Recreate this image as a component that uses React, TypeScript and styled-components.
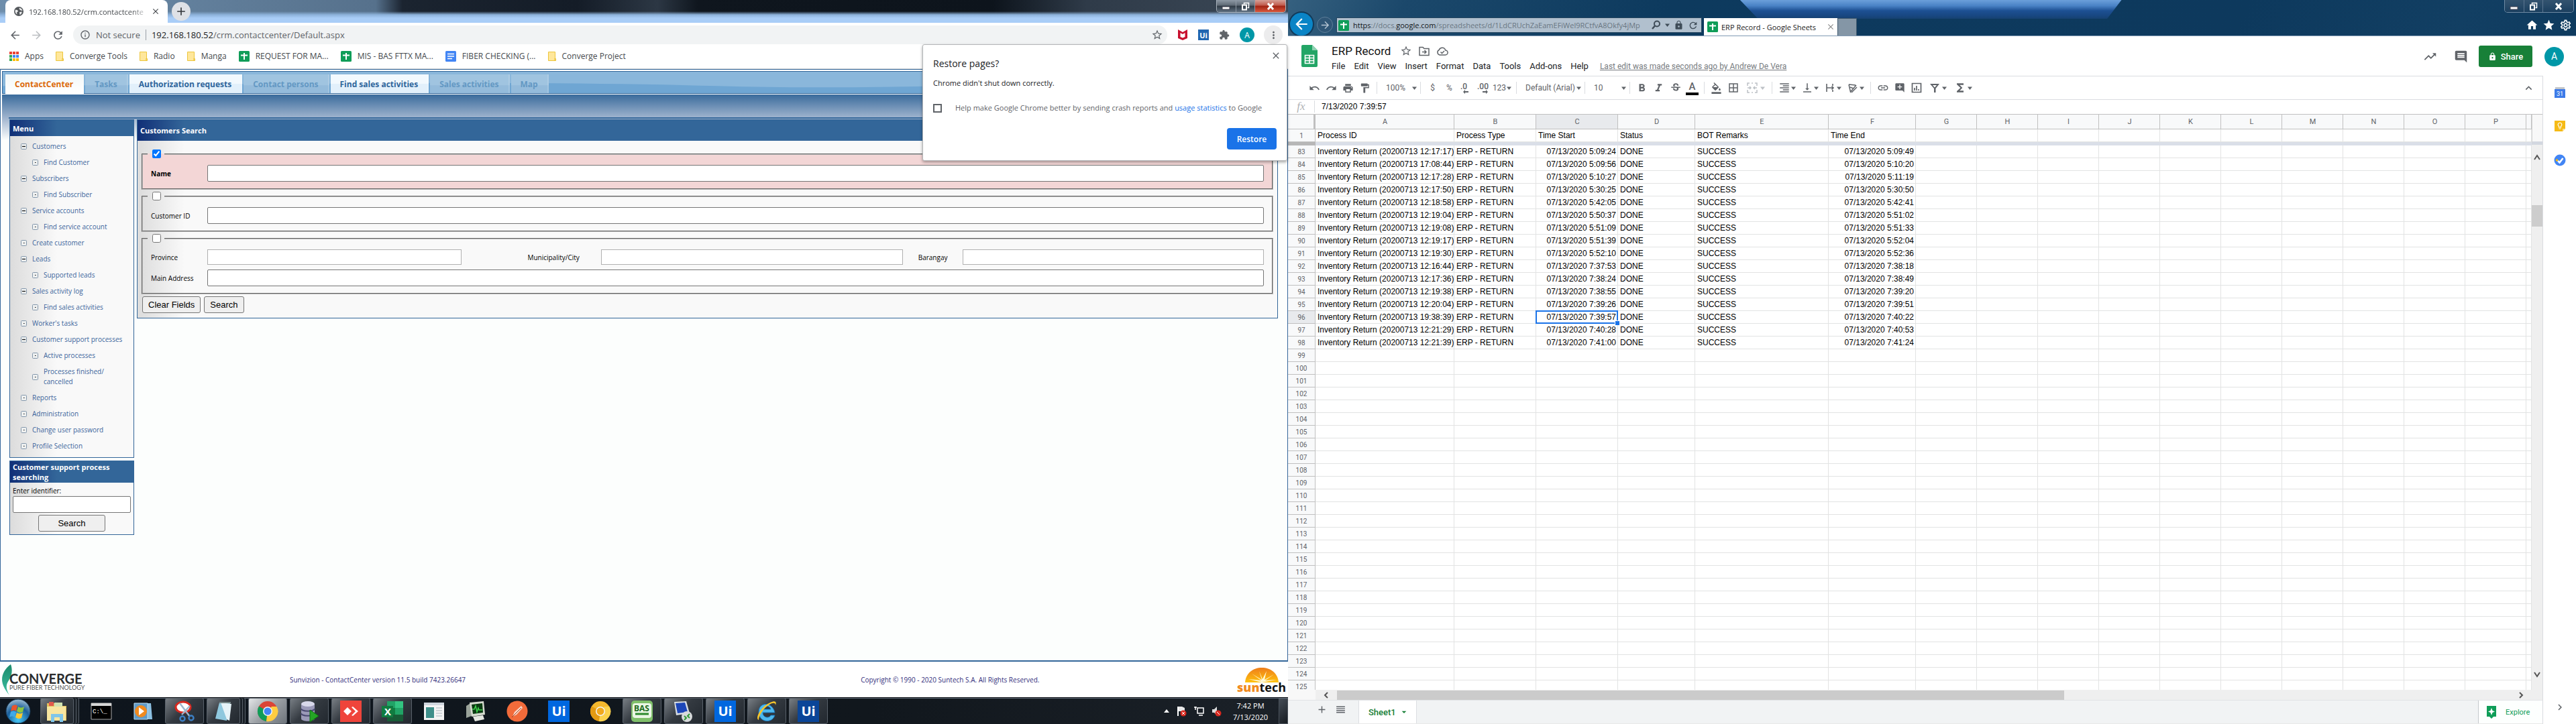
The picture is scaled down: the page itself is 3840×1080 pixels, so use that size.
import React from "react";
import styled, { createGlobalStyle, css } from "styled-components";
import {
  MdUndo, MdRedo, MdPrint, MdFormatPaint, MdFormatBold, MdFormatItalic, MdStrikethroughS,
  MdFormatColorFill, MdBorderAll, MdFormatAlignRight, MdVerticalAlignBottom, MdLink, MdAddComment,
  MdFunctions, MdTrendingUp, MdComment, MdLock, MdStarBorder, MdExtension, MdStar, MdHome,
  MdKeyboardArrowUp, MdChevronRight, MdArrowBack, MdArrowForward, MdRefresh, MdClose, MdMoreVert,
  MdInfoOutline, MdAdd, MdReorder, MdArrowDropDown, MdOutlineSettings,
} from "react-icons/md";

const ui = `"Open Sans", "Noto Sans", sans-serif`;
const arial = `"Liberation Sans", Arial, sans-serif`;
const roboto = `Roboto, "Liberation Sans", sans-serif`;
const navy = "#336699";

const Global = createGlobalStyle`
  * { box-sizing: border-box; }
  body { margin: 0; background: #fff; font-family: ${ui}; font-size: 12px; overflow: hidden; }
  button, input, select { font: inherit; margin: 0; }
  button { padding: 0; border: 0; background: none; color: inherit; }
  svg { display: block; flex: none; }
  a { color: inherit; text-decoration: none; }
`;

const Desktop = styled.div`
  display: grid;
  grid-template-columns: 1fr 1fr;
  height: 100vh;
  min-height: 800px;
`;
const Screen = styled.section`
  display: flex;
  flex-direction: column;
  min-width: 0;
  min-height: 0;
  background: #fff;
`;
const Spacer = styled.div<{ $grow?: number }>`
  flex: ${(p) => p.$grow ?? 1};
`;

/* ---------- window caption buttons ---------- */

const Caption = styled.div<{ $aero?: boolean }>`
  display: flex;
  width: 104px;
  height: 19px;
  border: 1px solid ${(p) => (p.$aero ? "#6f8aa3" : "#a9b3bd")};
  border-top: 0;
  border-radius: 0 0 5px 5px;
  overflow: hidden;
  color: #fff;
`;
const CaptionButton = styled.button<{ $close?: boolean; $aero?: boolean }>`
  flex: ${(p) => (p.$close ? "0 0 46px" : "1")};
  display: flex;
  justify-content: center;
  align-items: center;
  border-left: 1px solid ${(p) => (p.$aero ? "#5b7690" : "#8f99a4")};
  background: ${(p) =>
    p.$aero
      ? "linear-gradient(#33536f, #284a68 50%, #1b3f5f)"
      : p.$close
      ? "linear-gradient(#d5a097, #c0594a 45%, #a02313 50%, #d8583d)"
      : "linear-gradient(#8e99a5, #5e6974 45%, #2f3a45 50%, #5f7080)"};
  &:first-child {
    border-left: 0;
  }
`;
const CaptionButtons = ({ aero }: { aero?: boolean }) => (
  <Caption $aero={aero}>
    <CaptionButton $aero={aero} aria-label="Minimize">
      <svg width="13" height="12"><rect x="1" y="7" width="11" height="4" fill="#fff" stroke="#445" strokeWidth="1" /></svg>
    </CaptionButton>
    <CaptionButton $aero={aero} aria-label="Restore down">
      <svg width="13" height="13"><path d="M4.500 3.500V1.500h7v7h-2" fill="none" stroke="#fff" strokeWidth="1.500" /><path d="M2 4.500h6v7H2z" fill="none" stroke="#fff" strokeWidth="2" /></svg>
    </CaptionButton>
    <CaptionButton $aero={aero} $close aria-label="Close window">
      <svg width="12" height="11"><path d="M2 1l8 9M10 1L2 10" stroke="#fff" strokeWidth="3" /></svg>
    </CaptionButton>
  </Caption>
);

/* ---------- Chrome shell ---------- */

const TabStrip = styled.header`
  display: flex;
  align-items: flex-start;
  flex: none;
  height: 34px;
  padding: 0 3px 0 8px;
  background:
    linear-gradient(transparent 17px, #8db2da 22px, #a9cdf7 27px, #a9cdf7),
    linear-gradient(90deg, #6e8eac 0, #56718c 560px, #1b2430 600px, #141c27 860px, #2c3744 980px, #0f161e 1040px, #0d141c 1480px, #2f3b49 1620px, #3b4856);
`;
const BrowserTab = styled.div`
  display: flex;
  align-items: center;
  width: 242px;
  height: 34px;
  padding: 0 11px 0 13px;
  gap: 8px;
  background: #fff;
  border-radius: 8px 8px 0 0;
  color: #45494d;
`;
const TabTitle = styled.span`
  flex: 1;
  font-size: 11px;
  white-space: nowrap;
  mask-image: linear-gradient(90deg, #000 88%, rgba(0, 0, 0, 0.2));
`;
const NewTab = styled.button`
  display: grid;
  place-items: center;
  width: 28px;
  height: 28px;
  margin: 3px 0 0 6px;
  border-radius: 50%;
  background: #dee1e6;
  color: #33373b;
`;
const OmniRow = styled.div`
  display: flex;
  align-items: center;
  flex: none;
  height: 36px;
  padding: 0 8px 0 13px;
  gap: 14px;
  color: #5f6368;
`;
const IconButton = styled.button<{ $dim?: boolean }>`
  display: grid;
  place-items: center;
  width: 18px;
  height: 20px;
  color: ${(p) => (p.$dim ? "#bbbec1" : "inherit")};
`;
const Omnibox = styled.div`
  flex: 1;
  display: flex;
  align-items: center;
  height: 28px;
  padding: 0 6px 0 10px;
  gap: 8px;
  border-radius: 14px;
  background: #f1f3f4;
  font-size: 13px;
  white-space: nowrap;
`;
const OmniDivider = styled.i`
  width: 1px;
  height: 16px;
  background: #9aa0a6;
`;
const UrlText = styled.span`
  flex: 1;
  b {
    font-weight: 400;
    color: #202124;
  }
`;
const Round = styled.span<{ $size: number; $bg: string }>`
  display: grid;
  place-items: center;
  flex: none;
  width: ${(p) => p.$size}px;
  height: ${(p) => p.$size}px;
  border-radius: 50%;
  background: ${(p) => p.$bg};
  color: #fff;
  font-size: ${(p) => (p.$size > 24 ? 14 : 12)}px;
`;
const UiBadge = styled.span<{ $size: number; $bg: string }>`
  display: grid;
  place-items: center;
  width: ${(p) => p.$size}px;
  height: ${(p) => p.$size}px;
  background: ${(p) => p.$bg};
  color: #fff;
  font: 700 ${(p) => (p.$size > 20 ? 20 : 11)}px/1 ${ui};
`;
const Bookmarks = styled.nav`
  display: flex;
  align-items: center;
  flex: none;
  height: 33px;
  padding: 0 14px 5px;
  gap: 18px;
  border-bottom: 1px solid #d6d8db;
  white-space: nowrap;
  color: #45494d;
`;
const Bookmark = styled.a`
  display: flex;
  align-items: center;
  gap: 9px;
`;

const SheetsMark = ({ size = 16 }: { size?: number }) => (
  <svg width={size} height={size} viewBox="0 0 16 16"><rect width="16" height="16" rx="1.500" fill="#0f9d58" /><path d="M8 3v10M3 6.500h10" stroke="#fff" strokeWidth="2" /></svg>
);
const DocsMark = () => (
  <svg width="16" height="16" viewBox="0 0 16 16"><rect width="16" height="16" rx="1.500" fill="#4285f4" /><path d="M3 4.500h10M3 8h10M3 11.500h7" stroke="#fff" strokeWidth="1.500" /></svg>
);
const Folder = () => (
  <svg width="12" height="14" viewBox="0 0 12 14"><path d="M.5.500h10v10h1v3H.500z" fill="#ffe79b" stroke="#ecc53c" /><path d="M10 10v3" stroke="#e8b923" /></svg>
);
const AppsMark = () => {
  const c = ["#ea4335", "#ea4335", "#ea4335", "#34a853", "#4285f4", "#4285f4", "#34a853", "#fbbc05", "#fbbc05"];
  return (
    <svg width="14" height="14">{c.map((f, i) => <rect key={i} x={(i % 3) * 5} y={Math.floor(i / 3) * 5} width="4" height="4" fill={f} />)}</svg>
  );
};
const GlobeMark = () => (
  <svg width="14" height="14" viewBox="0 0 14 14"><circle cx="7" cy="7" r="7" fill="#54585c" /><path d="M2 4.500l3 .5 1 2-2 1.500.5 3L2.500 10 1.500 7z M7.500 1.500L11 3l1.500 3-2.500-.5L8 4z M8 8l4-.5-1.500 3.500L8.500 12z" fill="#fff" opacity=".9" /></svg>
);

const bookmarks: [React.ReactNode, string][] = [
  [<AppsMark />, "Apps"], [<Folder />, "Converge Tools"], [<Folder />, "Radio"], [<Folder />, "Manga"],
  [<SheetsMark />, "REQUEST FOR MA..."], [<SheetsMark />, "MIS - BAS FTTX MA..."], [<DocsMark />, "FIBER CHECKING (..."],
  [<Folder />, "Converge Project"],
];

/* ---------- restore bubble ---------- */

const ChromeWindow = styled.div`
  position: relative;
  display: flex;
  flex-direction: column;
  flex: 1;
  min-height: 0;
`;
const Bubble = styled.aside`
  position: absolute;
  z-index: 5;
  top: 66px;
  right: 1px;
  width: 544px;
  padding: 18px 15px 16px;
  background: #fff;
  border: 1px solid #b4b6b8;
  border-radius: 3px;
  box-shadow: 0 2px 4px rgba(0, 0, 0, 0.35);
  color: #202124;
  h2 {
    margin: 0 0 11px;
    font-size: 14px;
    font-weight: 400;
    line-height: 20px;
  }
  p {
    margin: 0 0 21px;
    font-size: 11px;
    line-height: 16px;
  }
`;
const BubbleClose = styled.button`
  position: absolute;
  top: 8px;
  right: 8px;
  color: #5f6368;
`;
const Consent = styled.label`
  display: flex;
  align-items: center;
  gap: 20px;
  margin-bottom: 22px;
  font-size: 11px;
  line-height: 16px;
  color: #5f6368;
  white-space: nowrap;
  a {
    color: #1a73e8;
  }
  input {
    appearance: none;
    width: 13px;
    height: 13px;
    flex: none;
    border: 2px solid #5f6368;
  }
`;
const RestoreButton = styled.button`
  display: block;
  width: 74px;
  height: 32px;
  margin-left: auto;
  border-radius: 4px;
  background: #1a73e8;
  color: #fff;
  font-weight: 600;
`;

/* ---------- CRM page ---------- */

const CrmPage = styled.main`
  flex: 1;
  display: flex;
  flex-direction: column;
  min-height: 0;
  padding: 2px 2px 0;
  border: 1px solid ${navy};
  border-bottom-width: 2px;
  background: #fff;
`;
const NavBar = styled.nav`
  position: relative;
  flex: none;
  display: flex;
  align-items: flex-end;
  gap: 2px;
  height: 34px;
  padding: 0 4px;
  border: 1px solid ${navy};
  background: #8ab7db;
  box-shadow: 0 1px 0 #fff;
`;
const Wave = styled.svg`
  position: absolute;
  inset: 0;
  width: 100%;
  height: 100%;
`;
const NavTab = styled.a<{ $kind: "active" | "on" | "off" }>`
  position: relative;
  height: 28px;
  padding: 0 14px;
  border-right: 2px solid rgba(255, 255, 255, 0.15);
  font-weight: 700;
  line-height: 29px;
  color: ${(p) => ({ active: "#dc6a0c", on: "#2f669b", off: "#6398c3" }[p.$kind])};
  background: ${(p) =>
    ({
      active: "linear-gradient(#f2f7f8, #fff)",
      on: "linear-gradient(#f2f9fe 48%, #e2f0fb 52%)",
      off: "linear-gradient(#a0c4e0 55%, #94bbdb 60%)",
    }[p.$kind])};
  ${(p) =>
    p.$kind === "active" &&
    css`
      box-shadow: 0 2px 0 #fff;
    `}
`;
const Stage = styled.div`
  flex: 1;
  min-height: 0;
  margin-top: 1px;
  padding: 34px 12px 0 10px;
  background: linear-gradient(#3a6b9c, #9db2cd 34px, #fcfefd 68px);
`;
const Columns = styled.div`
  display: grid;
  grid-template-columns: 186px 1fr;
  align-items: start;
  gap: 4px;
  padding: 1px 0 0 1px;
  border-top: 2px solid ${navy};
`;
const Side = styled.div`
  display: grid;
  gap: 4px;
`;
const Panel = styled.section`
  border: 1px solid ${navy};
  background: linear-gradient(90deg, #dcdcdc, #f9f9f9 70px);
`;
const PanelTitle = styled.h3<{ $h: number }>`
  display: flex;
  align-items: center;
  min-height: ${(p) => p.$h}px;
  margin: 0;
  padding: 1px 4px;
  background: linear-gradient(90deg, #112f77, ${navy} 70px);
  color: #fff;
  font-size: 11px;
  font-weight: 700;
  line-height: 15px;
`;
const MenuList = styled.ul`
  display: flex;
  flex-direction: column;
  gap: 9px;
  margin: 0;
  padding: 8px 8px 9px 16px;
  list-style: none;
`;
const MenuItem = styled.li<{ $sub?: boolean }>`
  display: flex;
  align-items: center;
  gap: 8px;
  padding-left: ${(p) => (p.$sub ? 17 : 0)}px;
  font-size: 10px;
  line-height: 15px;
  color: #3c659c;
`;
const NodeBox = ({ open }: { open?: boolean }) => (
  <svg width="9" height="9"><rect x=".5" y=".5" width="8" height="8" rx="1" fill="#eef0f0" stroke="#8397ab" /><path d={open ? "M2 4.500h5" : "M4 4.500h1.500"} stroke="#111" strokeWidth="1.200" /></svg>
);
const menu: [string, number, boolean][] = [
  ["Customers", 0, true], ["Find Customer", 1, false], ["Subscribers", 0, true], ["Find Subscriber", 1, false],
  ["Service accounts", 0, true], ["Find service account", 1, false], ["Create customer", 0, false], ["Leads", 0, true],
  ["Supported leads", 1, false], ["Sales activity log", 0, true], ["Find sales activities", 1, false], ["Worker's tasks", 0, false],
  ["Customer support processes", 0, true], ["Active processes", 1, false], ["Processes finished/ cancelled", 1, false],
  ["Reports", 0, false], ["Administration", 0, false], ["Change user password", 0, false], ["Profile Selection", 0, false],
];
const FinderBody = styled.form`
  display: flex;
  flex-direction: column;
  align-items: center;
  padding: 5px 4px 4px;
  gap: 3px;
  font-size: 10px;
  label {
    align-self: stretch;
    line-height: 15px;
  }
`;
const TextInput = styled.input<{ $soft?: boolean }>`
  display: block;
  width: 100%;
  min-width: 0;
  height: ${(p) => (p.$soft ? 23 : 25)}px;
  border: 1px solid ${(p) => (p.$soft ? "#b0b0b0" : "#767676")};
  border-radius: ${(p) => (p.$soft ? 0 : 2)}px;
  background: #fff;
`;
const PushButton = styled.button<{ $w?: number }>`
  width: ${(p) => (p.$w ? `${p.$w}px` : "auto")};
  height: 25px;
  padding: 0 8px;
  border: 1px solid #767676;
  border-radius: 3px;
  background: #efefef;
  color: #000;
  font: 13px ${arial};
`;
const SearchBody = styled.form`
  display: flex;
  flex-direction: column;
  gap: 3px;
  padding: 13px 6px 7px;
`;
const Group = styled.fieldset<{ $on?: boolean }>`
  min-width: 0;
  margin: 0;
  padding: 10px 12px;
  border: 2px groove #b8b8b8;
  background: ${(p) => (p.$on ? "#f3d6d6" : "transparent")};
  legend {
    margin-left: -5px;
    padding: 0 5px 0 7px;
  }
  legend input {
    display: block;
    width: 13px;
    height: 13px;
  }
`;
const FieldRow = styled.div`
  display: flex;
  align-items: center;
  font-size: 10px;
  & + & {
    margin-top: 7px;
  }
`;
const FieldLabel = styled.label<{ $w: number; $pad?: number; $bold?: boolean }>`
  flex: 0 0 ${(p) => p.$w}px;
  padding-left: ${(p) => p.$pad ?? 0}px;
  font-weight: ${(p) => (p.$bold ? 700 : 400)};
`;
const Cell = styled.div<{ $grow: number }>`
  flex: ${(p) => p.$grow} 1 0;
`;
const Buttons = styled.div`
  display: flex;
  gap: 5px;
  padding-left: 1px;
`;
const Footer = styled.footer`
  flex: none;
  display: flex;
  align-items: center;
  height: 53px;
  padding: 0 3px;
  font-size: 10px;
  color: #332e7c;
  background: #fff;
`;
const Converge = styled.div`
  display: flex;
  align-items: center;
  width: 429px;
  color: #2a2c2e;
  font-family: Lato, sans-serif;
  div {
    margin-left: -11px;
    padding-top: 6px;
  }
  strong {
    display: block;
    font-size: 20px;
    line-height: 18px;
  }
  small {
    display: block;
    font-size: 9px;
    line-height: 9px;
    color: #555;
  }
`;
const Suntech = styled.div`
  display: flex;
  flex-direction: column;
  align-items: center;
  color: #111;
  font: 700 18px/14px ${ui};
  b {
    color: #f18a1c;
  }
`;

const addressParts = ["Province", "Municipality/City", "Barangay"];

const CrmBody = () => (
  <>
    <CrmPage>
      <NavBar>
        <Wave viewBox="0 0 1900 33" preserveAspectRatio="none" aria-hidden="true">
          <path d="M0 22C500 18 800 14 1060 22S1600 12 1900 16V33H0z" fill="#6fa6d3" />
        </Wave>
        <NavTab $kind="active" href="#">ContactCenter</NavTab>
        <NavTab $kind="off" href="#">Tasks</NavTab>
        <NavTab $kind="on" href="#">Authorization requests</NavTab>
        <NavTab $kind="off" href="#">Contact persons</NavTab>
        <NavTab $kind="on" href="#">Find sales activities</NavTab>
        <NavTab $kind="off" href="#">Sales activities</NavTab>
        <NavTab $kind="off" href="#">Map</NavTab>
      </NavBar>
      <Stage>
        <Columns>
          <Side>
            <Panel>
              <PanelTitle $h={24}>Menu</PanelTitle>
              <MenuList>
                {menu.map(([t, lvl, open]) => (
                  <MenuItem key={t} $sub={lvl === 1}><NodeBox open={open} /><a href="#">{t}</a></MenuItem>
                ))}
              </MenuList>
            </Panel>
            <Panel>
              <PanelTitle $h={32}>Customer support process searching</PanelTitle>
              <FinderBody>
                <label>Enter identifier:<TextInput /></label>
                <PushButton type="button" $w={100}>Search</PushButton>
              </FinderBody>
            </Panel>
          </Side>
          <Panel>
            <PanelTitle $h={31}>Customers Search</PanelTitle>
            <SearchBody>
              <Group $on>
                <legend><input type="checkbox" defaultChecked aria-label="Search by name" /></legend>
                <FieldRow><FieldLabel htmlFor="name" $w={84} $bold>Name</FieldLabel><TextInput id="name" /></FieldRow>
              </Group>
              <Group>
                <legend><input type="checkbox" aria-label="Search by customer ID" /></legend>
                <FieldRow><FieldLabel htmlFor="cid" $w={84}>Customer ID</FieldLabel><TextInput id="cid" /></FieldRow>
              </Group>
              <Group>
                <legend><input type="checkbox" aria-label="Search by address" /></legend>
                <FieldRow>
                  {addressParts.map((f, i) => (
                    <React.Fragment key={f}>
                      <FieldLabel htmlFor={f} $w={[84, 208, 89][i]} $pad={[0, 98, 23][i]}>{f}</FieldLabel>
                      <Cell $grow={[38, 45, 45][i]}><TextInput id={f} $soft /></Cell>
                    </React.Fragment>
                  ))}
                </FieldRow>
                <FieldRow><FieldLabel htmlFor="addr" $w={84}>Main Address</FieldLabel><TextInput id="addr" /></FieldRow>
              </Group>
              <Buttons><PushButton type="button">Clear Fields</PushButton><PushButton type="button">Search</PushButton></Buttons>
            </SearchBody>
          </Panel>
        </Columns>
      </Stage>
    </CrmPage>
    <Footer>
      <Converge>
        <svg width="22" height="46" viewBox="0 0 22 46">
          <defs><linearGradient id="leaf" x1="0" y1="0" x2="0" y2="1"><stop offset="0" stopColor="#1b8a6b" /><stop offset="1" stopColor="#3fc0a2" /></linearGradient></defs>
          <path d="M13 0C2 8-3 20 2 32c2 5 5 9 9 14C5 36 6 30 10 24 15 17 16 8 13 0z" fill="url(#leaf)" />
        </svg>
        <div><strong>CONVERGE</strong><small>PURE FIBER TECHNOLOGY</small></div>
      </Converge>
      <span>Sunvizion - ContactCenter version 11.5 build 7423.26647</span>
      <Spacer $grow={2} />
      <span>Copyright © 1990 - 2020 Suntech S.A. All Rights Reserved.</span>
      <Spacer />
      <Suntech>
        <svg width="50" height="22" viewBox="0 0 50 22">
          <defs><linearGradient id="sun" x1="0" y1="0" x2="0" y2="1"><stop offset="0" stopColor="#ee7d1b" /><stop offset="1" stopColor="#ffc20e" /></linearGradient></defs>
          <path d="M0 22C1 8 12 0 25 0s24 8 25 22z" fill="url(#sun)" />
          <path d="M25 22L5 17l19 2-14-10 15 9-4-13 5 12 6-12-3 13 14-8-13 9 17-1z" fill="#fff8d8" />
        </svg>
        <span><b>sun</b>tech</span>
      </Suntech>
    </Footer>
  </>
);

/* ---------- taskbar ---------- */

const Taskbar = styled.footer`
  flex: none;
  display: flex;
  align-items: center;
  height: 40px;
  border-top: 1px solid #0a0d12;
  box-shadow: inset 0 1px 0 #66717e;
  background: linear-gradient(90deg, #0e151d, #11171d 1300px, #1b2128);
`;
const StartOrb = styled.button`
  width: 60px;
  padding-left: 8px;
`;
const TaskSlot = styled.button<{ $state?: "open" | "active"; $stack?: boolean }>`
  display: grid;
  place-items: center;
  width: ${(p) => (p.$stack ? 50 : 58)}px;
  height: 39px;
  margin-right: ${(p) => (p.$stack ? 12 : 4)}px;
  ${(p) =>
    p.$state &&
    css`
      border: 1px solid #59616a;
      border-radius: 3px;
      background: ${p.$state === "active"
        ? "linear-gradient(135deg, #e4e6e8, #9a9fa4 50%, #6e757c)"
        : "linear-gradient(135deg, #787e84, #343a41 45%, #22282f)"};
    `}
  ${(p) =>
    p.$stack &&
    css`
      box-shadow: 3px 0 0 #1a2027, 4px 0 0 #59616a, 7px 0 0 #1a2027, 8px 0 0 #59616a;
    `}
`;
const Tray = styled.div`
  display: flex;
  align-items: center;
  gap: 9px;
  margin-left: auto;
  color: #fff;
`;
const Clock = styled.time`
  width: 66px;
  font-size: 11px;
  line-height: 17px;
  text-align: center;
`;
const ShowDesktop = styled.button`
  width: 14px;
  height: 38px;
  border: 1px solid #4a525b;
  background: linear-gradient(135deg, #444c55, #171c22);
`;

const ChromeBall = ({ gold }: { gold?: boolean }) => (
  <svg width="32" height="32" viewBox="0 0 32 32">
    <circle cx="16" cy="16" r="15" fill={gold ? "#f5b82e" : "#db4437"} />
    <path d="M16 16L3 8.500A15 15 0 0 0 14 31z" fill={gold ? "#e39a12" : "#0f9d58"} />
    <path d="M16 16l6-7h7.500A15 15 0 0 1 14 31z" fill={gold ? "#fcd24d" : "#ffcd40"} />
    <circle cx="16" cy="16" r="7" fill="#f4f4f4" /><circle cx="16" cy="16" r="5.500" fill={gold ? "#f2a91c" : "#4285f4"} />
  </svg>
);
const Art = ({ children }: { children: React.ReactNode }) => <svg width="34" height="34" viewBox="0 0 34 34">{children}</svg>;

const taskIcons: [string, React.ReactNode, ("open" | "active")?, boolean?][] = [
  ["File Explorer", <Art><path d="M2 5h12l2 4h15v22H2z" fill="#e2bf5a" /><path d="M5 3h7v6H5z" fill="#e05a4d" /><path d="M13 4h12v8H13z" fill="#cfe2b0" /><path d="M2 10h28v21H2z" fill="#f8e6a0" /><path d="M8 33V21h18v12h-5v-7h-8v7z" fill="#7fc6ea" /></Art>, "open", true],
  ["Command Prompt", <Art><path d="M2 5h30v24H2z" fill="#000" stroke="#aaa" /><path d="M2 5h30v4H2z" fill="#d6d6d6" /><text x="4" y="20" fontSize="9" fill="#fff" fontFamily="Liberation Mono, monospace">C:\_</text></Art>],
  ["Media Player", <Art><path d="M9 5h20l2 24H12z" fill="#8cc0e2" /><path d="M4 5h20v24H4z" fill="#5f9bc9" stroke="#bfe0f5" /><circle cx="14" cy="17" r="9" fill="#f08a1f" /><path d="M11 11l8 6-8 6z" fill="#fff" /></Art>],
  ["Snipping Tool", <Art><ellipse cx="15" cy="11" rx="11" ry="8" fill="#fff" stroke="#d9281f" strokeWidth="3" /><path d="M10 5l15 20M25 9L13 22" stroke="#9fb6cc" strokeWidth="2.500" /><circle cx="27" cy="27" r="3.500" fill="none" stroke="#3d7fc4" strokeWidth="2.500" /><circle cx="14" cy="28" r="3.500" fill="none" stroke="#3d7fc4" strokeWidth="2.500" /></Art>, "open"],
  ["Notepad", <Art><path d="M11 4l16 1-5 26-17-3z" fill="#8fc8de" /><path d="M13 4l16 2-3 25-4-2z" fill="#e6f3f8" /><path d="M11 4h17" stroke="#788" strokeWidth="2" /></Art>, "open", true],
  ["Google Chrome", <ChromeBall />, "active"],
  ["SQL Tool", <Art><path d="M5 6v22c0 5 20 5 20 0V6z" fill="#9a99b8" /><ellipse cx="15" cy="6" rx="10" ry="4" fill="#d8d8ea" /><path d="M5 13c0 5 20 5 20 0M5 20c0 5 20 5 20 0" fill="none" stroke="#4a4972" strokeWidth="2" /><path d="M18 15l13 9-13 9z" fill="#25a525" stroke="#0d6e10" /></Art>, "open"],
  ["AnyDesk", <Art><path d="M1 1h32v32H1z" fill="#ef443b" /><path d="M12 11l6 6-6 6-6-6zM18 11l2-1 8 7-8 7-2-1 6-6z" fill="#fff" /></Art>, "open"],
  ["Excel", <Art><path d="M9 2h24v30H9z" fill="#21a366" /><path d="M21 2h12v10H21z" fill="#33c481" /><path d="M9 12h12v10H9z" fill="#107c41" /><path d="M9 22h24v10H9z" fill="#185c37" /><path d="M1 9h17v17H1z" fill="#107c41" /><text x="5" y="23" fontSize="15" fontWeight="700" fill="#fff" fontFamily="Open Sans, sans-serif">X</text></Art>, "open"],
  ["Application", <Art><path d="M2 4h30v26H2z" fill="#f4f4f4" /><path d="M2 4h30v4H2z" fill="#cfd6de" /><path d="M5 11h12v16H5z" fill="#3f8f8a" /><path d="M20 12h9M20 16h9M20 20h9M20 24h9" stroke="#a9b4bd" /></Art>],
  ["Monitor", <Art><path d="M3 9l8-5v20l-8 3z" fill="#9aa39a" /><path d="M8 4l21-2 2 20-20 3z" fill="#d6dbd0" /><path d="M11 7l16-2 1 14-15 2z" fill="#0b3b12" /><path d="M12 14h3l2-5 2 9 2-6 1 3h5" fill="none" stroke="#3fd14c" strokeWidth="1.500" /><path d="M13 25l15-2 2 6-14 3z" fill="#e6e8e2" /></Art>],
  ["Postman", <Art><circle cx="17" cy="17" r="15.500" fill="#f26b3a" /><path d="M10 25l3-7 10-9 2 3-9 10z" fill="#fbd9cb" /><path d="M9 26l14-14" stroke="#9c3f1c" /></Art>],
  ["UiPath Studio", <UiBadge $size={32} $bg="#0067df">Ui</UiBadge>],
  ["Chrome Canary", <ChromeBall gold />],
  ["BAS", <Art><rect x="1" y="1" width="32" height="32" rx="5" fill="#7fbf6a" /><rect x="3" y="5" width="28" height="22" rx="4" fill="#eaf6e4" /><text x="5" y="17" fontSize="12" fontWeight="700" fill="#1c6b1c" fontFamily="Open Sans, sans-serif">BAS</text><path d="M7 21h20" stroke="#2d8a2d" strokeWidth="3" /></Art>, "open"],
  ["Remote Desktop", <Art><path d="M3 3l18-1 5 18-20 3z" fill="#d8dde3" /><path d="M5 5l14-1 4 14-15 2z" fill="#1c46b8" /><circle cx="22" cy="25" r="8" fill="#d7d9db" /><path d="M18 24l3 3-3 3M26 21l-3 3 3 3" fill="none" stroke="#2f9a36" strokeWidth="2" /></Art>, "open"],
  ["UiPath Assistant", <UiBadge $size={32} $bg="#0067df">Ui</UiBadge>, "open"],
  ["Internet Explorer", <Art><path d="M29 19H11c0 8 10 9 12 4h6c-4 13-24 11-24-5S26 3 29 19zm-6-5c-1-6-11-6-12 0z" fill="#4db8ee" stroke="#1b74b8" /><path d="M5 30C-1 28 7 11 22 4c8-4 10-1 8 4 0-4-4-4-9-1C11 13 5 24 5 30z" fill="#f6c52c" /></Art>, "open"],
  ["UiPath Robot", <UiBadge $size={32} $bg="#0a4598">Ui</UiBadge>, "open"],
];

const DesktopTaskbar = () => (
  <Taskbar>
    <StartOrb aria-label="Start">
      <svg width="38" height="38" viewBox="0 0 38 38">
        <defs><radialGradient id="orb" cx=".5" cy=".85" r=".8"><stop offset="0" stopColor="#48c8f5" /><stop offset=".6" stopColor="#1a5f9c" /><stop offset="1" stopColor="#8fb2cc" /></radialGradient></defs>
        <circle cx="19" cy="19" r="18" fill="url(#orb)" stroke="#16354f" />
        <path d="M10 11c3-2 6-2 8 0l-2 8c-2-2-5-2-8 0z" fill="#e9552b" /><path d="M19 12c3 2 6 2 9 0l-2 8c-3 2-6 1-9-1z" fill="#8cc63f" /><path d="M8 20c3-2 5-1 8 0l-2 8c-3-2-5-2-8 0z" fill="#3fa9e8" /><path d="M17 21c3 2 6 2 9 0l-2 8c-3 2-6 1-9-1z" fill="#fdc92f" />
      </svg>
    </StartOrb>
    {taskIcons.map(([name, icon, state, stack]) => (
      <TaskSlot key={name} $state={state} $stack={stack} aria-label={name}>{icon}</TaskSlot>
    ))}
    <Tray>
      <svg width="10" height="6"><path d="M5 0l4 5H1z" fill="#fff" /></svg>
      <svg width="17" height="18"><path d="M3 2v14" stroke="#fff" strokeWidth="2" /><path d="M4 2h5l4 2v5H4z" fill="#e8e8e8" /><circle cx="11" cy="12" r="4.500" fill="#d8281e" /><path d="M9 10l4 4M13 10l-4 4" stroke="#fff" /></svg>
      <svg width="17" height="18"><path d="M6 4h9v8H6zM8 15h6M3 2v5M1 3h4" fill="none" stroke="#fff" strokeWidth="1.500" /></svg>
      <svg width="17" height="18"><path d="M2 6h3l4-4v13l-4-4H2z" fill="#ddd" /><circle cx="11" cy="12" r="4.500" fill="#d8281e" /><path d="M9 10l4 4" stroke="#fff" /></svg>
      <Clock>7:42 PM<br />7/13/2020</Clock>
      <ShowDesktop aria-label="Show desktop" />
    </Tray>
  </Taskbar>
);

const ChromeSide = () => (
  <Screen>
    <ChromeWindow>
      <TabStrip>
        <BrowserTab><GlobeMark /><TabTitle>192.168.180.52/crm.contactcente</TabTitle><MdClose size={14} /></BrowserTab>
        <NewTab aria-label="New tab"><MdAdd size={20} /></NewTab>
        <Spacer />
        <CaptionButtons />
      </TabStrip>
      <OmniRow>
        <IconButton aria-label="Back"><MdArrowBack size={19} /></IconButton>
        <IconButton aria-label="Forward" $dim><MdArrowForward size={19} /></IconButton>
        <IconButton aria-label="Reload"><MdRefresh size={19} /></IconButton>
        <Omnibox>
          <MdInfoOutline size={16} />
          <span>Not secure</span>
          <OmniDivider />
          <UrlText><b>192.168.180.52</b>/crm.contactcenter/Default.aspx</UrlText>
          <MdStarBorder size={18} />
        </Omnibox>
        <IconButton aria-label="McAfee">
          <svg width="14" height="16" viewBox="0 0 14 16"><path d="M0 0l7 4 7-4v13l-7 3-7-3zM3.500 5v6L7 12.500l3.500-1.500V5L7 7z" fill="#c8102e" fillRule="evenodd" /></svg>
        </IconButton>
        <UiBadge $size={16} $bg="#2166b0">Ui</UiBadge>
        <IconButton aria-label="Extensions"><MdExtension size={16} /></IconButton>
        <Round $size={22} $bg="#0097a7">A</Round>
        <Round $size={28} $bg="#ececed"><MdMoreVert size={17} color="#5f6368" /></Round>
      </OmniRow>
      <Bookmarks>
        {bookmarks.map(([icon, t]) => <Bookmark key={t} href="#">{icon}{t}</Bookmark>)}
      </Bookmarks>
      <CrmBody />
      <Bubble>
        <BubbleClose aria-label="Close"><MdClose size={16} /></BubbleClose>
        <h2>Restore pages?</h2>
        <p>Chrome didn't shut down correctly.</p>
        <Consent><input type="checkbox" /><span>Help make Google Chrome better by sending crash reports and <a href="#">usage statistics</a> to Google</span></Consent>
        <RestoreButton>Restore</RestoreButton>
      </Bubble>
    </ChromeWindow>
    <DesktopTaskbar />
  </Screen>
);

/* ---------- Internet Explorer shell ---------- */

const IeHeader = styled.header`
  position: relative;
  flex: none;
  display: flex;
  align-items: flex-end;
  height: 54px;
  padding: 0 3px;
  border-bottom: 1px solid #7f99b3;
  overflow: hidden;
  background: linear-gradient(115deg, #35607f 0, #1b486b 160px, #0d3a5e 520px, #0d395d 1300px, #123f63 1600px, #0e3a5e 1780px, #3a6180);
  &::before {
    content: "";
    position: absolute;
    top: -2px;
    left: 35%;
    width: 572px;
    height: 30px;
    clip-path: polygon(0 0, 100% 0, 96% 100%, 5% 100%);
    background: linear-gradient(#73a6df, #4a83c6 35%, #1d5093 60%, #184781 85%, #164170);
  }
`;
const BackButton = styled.button`
  display: grid;
  place-items: center;
  width: 34px;
  height: 34px;
  border-radius: 50%;
  background: #0a84c6;
  color: #fff;
  box-shadow: 0 0 0 2px #123a59;
`;
const ForwardButton = styled.button`
  display: grid;
  place-items: center;
  width: 24px;
  height: 24px;
  margin: 0 5px 4px 6px;
  border: 1px solid #5f7f9a;
  border-radius: 50%;
  background: #2f5676;
  color: #b4c4d2;
`;
const AddressBar = styled.div`
  display: flex;
  align-items: center;
  flex: 0 1 auto;
  width: 545px;
  min-width: 0;
  height: 23px;
  margin: 0 3px 4px 0;
  padding: 0 4px 0 2px;
  gap: 6px;
  border: 1px solid #24455f;
  background: #b1c0ce;
  color: #3f4c58;
`;
const Address = styled.span`
  flex: 1;
  min-width: 0;
  font-size: 11px;
  white-space: nowrap;
  color: #6a7783;
  b {
    font-weight: 400;
    color: #101418;
  }
`;
const IeTab = styled.div`
  position: relative;
  display: flex;
  align-items: center;
  width: 199px;
  height: 26px;
  padding: 0 3px 0 5px;
  gap: 5px;
  background: #fff;
  color: #1b1b1b;
  font-size: 11px;
  white-space: nowrap;
  span {
    flex: 1;
  }
`;
const IeNewTab = styled.button`
  position: relative;
  width: 29px;
  height: 26px;
  border: 1px solid #40596e;
  border-bottom: 0;
  background: #8496a6;
`;
const IeRight = styled.div`
  display: flex;
  flex-direction: column;
  align-items: flex-end;
  align-self: stretch;
  gap: 9px;
`;
const IeTools = styled.div`
  display: flex;
  gap: 6px;
  padding-right: 3px;
  color: #fff;
`;

/* ---------- Google Sheets ---------- */

const SheetsHead = styled.div`
  flex: none;
  display: flex;
  align-items: flex-start;
  height: 59px;
  padding: 13px 18px 0 20px;
  font-family: ${roboto};
`;
const TitleBlock = styled.div`
  margin-left: 21px;
`;
const TitleLine = styled.div`
  display: flex;
  align-items: center;
  gap: 9px;
  height: 18px;
  color: #5f6368;
  h1 {
    margin: 0 5px 0 0;
    font-size: 17px;
    font-weight: 400;
    line-height: 18px;
    color: #111;
  }
`;
const Menus = styled.nav`
  display: flex;
  gap: 13px;
  margin-top: 5px;
  font-size: 13px;
  line-height: 18px;
  color: #202124;
  white-space: nowrap;
`;
const LastEdit = styled.a`
  margin-left: 4px;
  font-size: 12px;
  color: #777b80;
  text-decoration: underline;
`;
const HeadActions = styled.div`
  display: flex;
  align-items: center;
  margin: 1px 0 0 auto;
  color: #5f6368;
`;
const HeadIcon = styled.button`
  display: grid;
  place-items: center;
  width: 46px;
`;
const ShareButton = styled.button`
  display: flex;
  align-items: center;
  justify-content: center;
  gap: 6px;
  width: 80px;
  height: 32px;
  margin: 0 18px 0 4px;
  border-radius: 3px;
  background: #188038;
  color: #fff;
  font-size: 13px;
  font-weight: 500;
`;
const SheetsBody = styled.div`
  flex: 1;
  display: flex;
  min-height: 0;
`;
const SheetsMain = styled.div`
  flex: 1;
  min-width: 0;
  display: flex;
  flex-direction: column;
  border-top: 1px solid #dadce0;
`;
const Toolbar = styled.div`
  flex: none;
  display: flex;
  align-items: center;
  height: 35px;
  padding: 0 8px 0 27px;
  border-bottom: 1px solid #dadce0;
  color: #5f6368;
  font: 12px ${roboto};
`;
const Tool = styled.button<{ $w?: number; $dim?: boolean }>`
  display: flex;
  align-items: center;
  justify-content: center;
  gap: 1px;
  flex: none;
  width: ${(p) => p.$w ?? 25}px;
  height: 26px;
  color: ${(p) => (p.$dim ? "#bdc1c6" : "inherit")};
`;
const Sep = styled.i`
  flex: none;
  width: 1px;
  height: 18px;
  margin: 0 5px;
  background: #dadce0;
`;
const Pick = styled.label<{ $w: number }>`
  display: flex;
  align-items: center;
  width: ${(p) => p.$w}px;
  padding-left: 8px;
  select {
    flex: 1;
    min-width: 0;
    appearance: none;
    border: 0;
    padding: 0;
    background: none;
    color: inherit;
  }
`;
const ColorMark = styled.span`
  display: block;
  width: 19px;
  border-bottom: 4px solid #000;
  font-size: 15px;
  line-height: 17px;
  font-weight: 500;
`;
const FormulaBar = styled.div`
  flex: none;
  display: flex;
  align-items: center;
  height: 21px;
  padding-bottom: 1px;
  font: 13px ${arial};
  color: #000;
  i {
    width: 40px;
    border-right: 1px solid #dadce0;
    text-align: center;
    color: #b0b3b6;
    font: italic 17px/18px "Liberation Serif", serif;
  }
  input {
    flex: 1;
    border: 0;
    padding: 0 0 0 10px;
    font-size: 12px;
    outline: 0;
  }
`;
const GridArea = styled.div`
  flex: 1;
  display: flex;
  min-height: 0;
  overflow: hidden;
`;
const GridClip = styled.div`
  flex: 1;
  min-width: 0;
  overflow: hidden;
`;
const Grid = styled.table`
  width: 100%;
  table-layout: fixed;
  border-collapse: separate;
  border-spacing: 0;
  border-top: 1px solid #c0c0c0;
  font: 12px ${arial};
  color: #000;
  td,
  th {
    height: 19px;
    padding: 0 2px 0 3px;
    line-height: 17px;
    font-weight: 400;
    white-space: nowrap;
    border-right: 1px solid #e2e3e3;
    border-bottom: 1px solid #e2e3e3;
  }
`;
const ColHead = styled.th<{ $on?: boolean; $corner?: boolean }>`
  && {
    height: 22px;
    font: 11px ${roboto};
    color: #5f6368;
    background: ${(p) => (p.$on ? "#e8eaed" : "#f8f9fa")};
    border-color: #c0c0c0;
    border-right-width: ${(p) => (p.$corner ? 3 : 1)}px;
  }
`;
const RowHead = styled.th<{ $on?: boolean }>`
  && {
    padding: 0;
    font: 10px ${roboto};
    color: #5f6368;
    background: ${(p) => (p.$on ? "#e8eaed" : "#f8f9fa")};
    border-color: #c0c0c0;
  }
`;
const FreezeCell = styled.td<{ $dark?: boolean }>`
  && {
    height: 5px;
    padding: 0;
    border: 0;
    line-height: 0;
    background: ${(p) => (p.$dark ? "#b7b7b7" : "#dadfe8")};
  }
`;
const DataCell = styled.td<{ $right?: boolean; $sel?: boolean }>`
  position: relative;
  text-align: ${(p) => (p.$right ? "right" : "left")};
  ${(p) =>
    p.$sel &&
    css`
      &::before {
        content: "";
        position: absolute;
        inset: -1px;
        border: 2px solid #1a73e8;
      }
      &::after {
        content: "";
        position: absolute;
        right: -3px;
        bottom: -3px;
        width: 6px;
        height: 6px;
        background: #1a73e8;
        border: 1px solid #fff;
        border-width: 1px 0 0 1px;
        z-index: 1;
      }
    `}
`;
const VScroll = styled.div`
  flex: none;
  display: flex;
  flex-direction: column;
  align-items: center;
  width: 16px;
  border-top: 1px solid #c0c0c0;
  background: #efefef;
  color: #555;
`;
const VHead = styled.div`
  width: 100%;
  height: 45px;
  border-left: 1px solid #d5d5d5;
  border-bottom: 5px solid #d3d8e0;
  background: #f8f8f8;
`;
const VThumb = styled.div`
  width: 100%;
  height: 32px;
  margin: 54px 0 auto;
  background: #cdcdcd;
`;
const HScroll = styled.div`
  flex: none;
  display: flex;
  align-items: center;
  height: 15px;
  padding: 0 16px 0 41px;
  background: linear-gradient(90deg, #f8f8f8 41px, #efefef 41px);
  color: #555;
`;
const Arrow = styled.span`
  display: grid;
  place-items: center;
  width: 32px;
`;
const HTrack = styled.div`
  flex: 1;
`;
const HThumb = styled.div`
  width: 62%;
  height: 14px;
  background: #cbcbcb;
`;
const SheetTabs = styled.div`
  flex: none;
  display: flex;
  align-items: stretch;
  height: 36px;
  padding-left: 36px;
  border-top: 1px solid #e1e3e6;
  border-bottom: 1px solid #e8e8e8;
  background: #f1f3f4;
  color: #5f6368;
  font: 13px ${roboto};
`;
const SheetTab = styled.button`
  display: flex;
  align-items: center;
  gap: 4px;
  margin-left: 13px;
  width: 87px;
  padding-left: 14px;
  border: 0 solid #dcdfe2;
  border-width: 0 1px;
  background: #fff;
  color: #188038;
  font-weight: 500;
`;
const ExploreButton = styled.button`
  display: flex;
  align-items: center;
  gap: 13px;
  width: 96px;
  margin-left: auto;
  padding-left: 11px;
  border-left: 1px solid #c6c9cc;
  background: #fdfffe;
  color: #109d58;
  font-size: 11px;
`;
const SidePanel = styled.aside`
  flex: none;
  display: flex;
  flex-direction: column;
  align-items: center;
  gap: 34px;
  width: 50px;
  padding: 17px 0 16px;
  border-left: 1px solid #dadce0;
  color: #5f6368;
`;

const Caret = () => <svg width="7" height="5"><path d="M0 .500h7L3.500 5z" fill="currentColor" /></svg>;
const Decimals = ({ more }: { more?: boolean }) => (
  <svg width="18" height="20" fill="currentColor"><text x="0" y="12" fontSize="12" fontWeight="500" fontFamily="Roboto, sans-serif">{more ? ".00" : ".0"}</text><path d={more ? "M8 15h5v-2l3 3-3 3v-2H8z" : "M12 15H7v-2l-3 3 3 3v-2h5z"} /></svg>
);

const columns = [41, 207, 122, 122, 115, 199, 130, 91, 91, 91, 91, 91, 91, 91, 91, 91, 91];
const letters = "ABCDEFGHIJKLMNOP".split("");
const records = [
  "12:17:17|5:09:24|5:09:49", "17:08:44|5:09:56|5:10:20", "12:17:28|5:10:27|5:11:19", "12:17:50|5:30:25|5:30:50",
  "12:18:58|5:42:05|5:42:41", "12:19:04|5:50:37|5:51:02", "12:19:08|5:51:09|5:51:33", "12:19:17|5:51:39|5:52:04",
  "12:19:30|5:52:10|5:52:36", "12:16:44|7:37:53|7:38:18", "12:17:36|7:38:24|7:38:49", "12:19:38|7:38:55|7:39:20",
  "12:20:04|7:39:26|7:39:51", "19:38:39|7:39:57|7:40:22", "12:21:29|7:40:28|7:40:53", "12:21:39|7:41:00|7:41:24",
].map((r) => r.split("|"));
const rowNumbers = Array.from({ length: 43 }, (_, i) => 83 + i);
const blanks = (n: number) => Array.from({ length: n }, (_, i) => <td key={i} />);

const SheetGrid = () => (
  <Grid>
    <colgroup>{columns.map((w, i) => <col key={i} style={{ width: w }} />)}<col /></colgroup>
    <thead>
      <tr><ColHead $corner />{letters.map((l) => <ColHead key={l} $on={l === "C"}>{l}</ColHead>)}<ColHead /></tr>
    </thead>
    <tbody>
      <tr>
        <RowHead>1</RowHead>
        {["Process ID", "Process Type", "Time Start", "Status", "BOT Remarks", "Time End"].map((h) => <DataCell key={h}>{h}</DataCell>)}
        {blanks(11)}
      </tr>
      <tr><FreezeCell $dark /><FreezeCell colSpan={17} /></tr>
      {rowNumbers.map((n) => {
        const r = records[n - 83];
        return (
          <tr key={n}>
            <RowHead $on={n === 96}>{n}</RowHead>
            {r ? (
              <>
                <DataCell>Inventory Return (20200713 {r[0]})</DataCell>
                <DataCell>ERP - RETURN</DataCell>
                <DataCell $right $sel={n === 96}>07/13/2020 {r[1]}</DataCell>
                <DataCell>DONE</DataCell>
                <DataCell>SUCCESS</DataCell>
                <DataCell $right>07/13/2020 {r[2]}</DataCell>
                {blanks(11)}
              </>
            ) : blanks(17)}
          </tr>
        );
      })}
    </tbody>
  </Grid>
);

const SheetsSide = () => (
  <Screen>
    <IeHeader>
      <BackButton aria-label="Back"><MdArrowBack size={26} /></BackButton>
      <ForwardButton aria-label="Forward"><MdArrowForward size={17} /></ForwardButton>
      <AddressBar>
        <SheetsMark />
        <Address><b>https</b>://docs.<b>google.com</b>/spreadsheets/d/1LdCRUchZaEamEFiWel9RCtfvA8Okfy4jMp</Address>
        <svg width="15" height="15"><circle cx="9" cy="5.500" r="4" fill="none" stroke="currentColor" strokeWidth="2" /><path d="M6 8.500L2 13" stroke="currentColor" strokeWidth="2.500" /></svg>
        <Caret />
        <MdLock size={15} />
        <MdRefresh size={16} />
      </AddressBar>
      <IeTab><SheetsMark /><span>ERP Record - Google Sheets</span><MdClose size={14} color="#8a8a8a" /></IeTab>
      <IeNewTab aria-label="New tab" />
      <Spacer />
      <IeRight>
        <CaptionButtons aero />
        <IeTools><MdHome size={19} /><MdStar size={19} /><MdOutlineSettings size={19} /></IeTools>
      </IeRight>
    </IeHeader>
    <SheetsHead>
      <svg width="24" height="33" viewBox="0 0 24 33"><path d="M2 0h14l8 8v23a2 2 0 0 1-2 2H2a2 2 0 0 1-2-2V2a2 2 0 0 1 2-2z" fill="#23a566" /><path d="M16 0l8 8h-8z" fill="#8ed1b1" /><path d="M5.500 15.500h13v12h-13zM5.500 19.500h13M5.500 23.500h13M12 15.500v12" fill="none" stroke="#fff" strokeWidth="1.600" /></svg>
      <TitleBlock>
        <TitleLine>
          <h1>ERP Record</h1>
          <MdStarBorder size={18} />
          <svg width="18" height="18" viewBox="0 0 18 18"><path d="M2 3.500h5l2 2h7v10H2zM6 10.500h6M9.500 8l2.500 2.500L9.500 13" fill="none" stroke="currentColor" strokeWidth="1.500" /></svg>
          <svg width="18" height="18" viewBox="0 0 18 18"><path d="M5 15a4 4 0 0 1-.8-7.500 5 5 0 0 1 9.500.5A3.500 3.500 0 0 1 13.500 15zM6.500 10.500l2 2 3.500-3.500" fill="none" stroke="currentColor" strokeWidth="1.500" /></svg>
        </TitleLine>
        <Menus>
          {["File", "Edit", "View", "Insert", "Format", "Data", "Tools", "Add-ons", "Help"].map((m) => <a key={m} href="#">{m}</a>)}
          <LastEdit href="#">Last edit was made seconds ago by Andrew De Vera</LastEdit>
        </Menus>
      </TitleBlock>
      <HeadActions>
        <HeadIcon aria-label="Activity"><MdTrendingUp size={21} /></HeadIcon>
        <HeadIcon aria-label="Comments"><MdComment size={21} /></HeadIcon>
        <ShareButton><MdLock size={13} />Share</ShareButton>
        <Round $size={29} $bg="#0097a7">A</Round>
      </HeadActions>
    </SheetsHead>
    <SheetsBody>
      <SheetsMain>
        <Toolbar>
          <Tool aria-label="Undo"><MdUndo size={17} /></Tool>
          <Tool aria-label="Redo"><MdRedo size={17} /></Tool>
          <Tool aria-label="Print"><MdPrint size={17} /></Tool>
          <Tool aria-label="Paint format"><MdFormatPaint size={17} /></Tool>
          <Sep />
          <Pick $w={54}><select aria-label="Zoom"><option>100%</option></select><Caret /></Pick>
          <Sep />
          <Tool>$</Tool><Tool>%</Tool>
          <Tool aria-label="Decrease decimal places"><Decimals /></Tool>
          <Tool aria-label="Increase decimal places"><Decimals more /></Tool>
          <Tool $w={32}>123<Caret /></Tool>
          <Sep />
          <Pick $w={91}><select aria-label="Font"><option>Default (Arial)</option></select><Caret /></Pick>
          <Sep />
          <Pick $w={56}><select aria-label="Font size"><option>10</option></select><Caret /></Pick>
          <Sep />
          <Tool aria-label="Bold"><MdFormatBold size={19} /></Tool>
          <Tool aria-label="Italic"><MdFormatItalic size={19} /></Tool>
          <Tool aria-label="Strikethrough"><MdStrikethroughS size={18} /></Tool>
          <Tool aria-label="Text color"><ColorMark>A</ColorMark></Tool>
          <Sep />
          <Tool aria-label="Fill color"><MdFormatColorFill size={17} /></Tool>
          <Tool aria-label="Borders"><MdBorderAll size={18} /></Tool>
          <Tool aria-label="Merge cells" $w={40} $dim>
            <svg width="22" height="16" viewBox="0 0 22 16"><path d="M7 1H4v4M15 1h3v4M4 11v4h3M18 11v4h-3M4 8h5M7 6l2 2-2 2M18 8h-5M15 6l-2 2 2 2M10 1h2M10 15h2" fill="none" stroke="currentColor" strokeWidth="1.500" /></svg>
            <Caret />
          </Tool>
          <Sep />
          <Tool $w={34} aria-label="Horizontal align"><MdFormatAlignRight size={18} /><Caret /></Tool>
          <Tool $w={34} aria-label="Vertical align"><MdVerticalAlignBottom size={18} /><Caret /></Tool>
          <Tool $w={34} aria-label="Text wrapping">
            <svg width="18" height="18"><path d="M4 3v12M13 3v3M13 12v3M4 9h10M11.500 6.500L14 9l-2.500 2.500" fill="none" stroke="currentColor" strokeWidth="1.600" /></svg><Caret />
          </Tool>
          <Tool $w={34} aria-label="Text rotation">
            <svg width="18" height="18"><path d="M3 4l2.500 11L14 5M3 4l10 1M5 8l5 2M7 16l8-8" fill="none" stroke="currentColor" strokeWidth="1.500" /></svg><Caret />
          </Tool>
          <Sep />
          <Tool aria-label="Insert link"><MdLink size={18} /></Tool>
          <Tool aria-label="Insert comment"><MdAddComment size={16} /></Tool>
          <Tool aria-label="Insert chart">
            <svg width="16" height="16"><path d="M1.500 1.500h13v13h-13zM5 8v4M8 5v7M11 10v2" fill="none" stroke="currentColor" strokeWidth="1.700" /></svg>
          </Tool>
          <Tool $w={38} aria-label="Filter">
            <svg width="20" height="16"><path d="M3 2h14l-5.500 7v6h-2.500V9zM7 4l3 3.500L13 4z" fill="currentColor" fillRule="evenodd" /></svg><Caret />
          </Tool>
          <Tool $w={38} aria-label="Functions"><MdFunctions size={20} /><Caret /></Tool>
          <Spacer />
          <Tool aria-label="Hide menus"><MdKeyboardArrowUp size={19} /></Tool>
        </Toolbar>
        <FormulaBar><i>fx</i><input aria-label="Cell value" defaultValue="7/13/2020 7:39:57" /></FormulaBar>
        <GridArea>
          <GridClip><SheetGrid /></GridClip>
          <VScroll>
            <VHead />
            <svg width="12" height="36"><path d="M2 22l4-6 4 6" fill="none" stroke="currentColor" strokeWidth="2" /></svg>
            <VThumb />
            <svg width="12" height="36"><path d="M2 10l4 6 4-6" fill="none" stroke="currentColor" strokeWidth="2" /></svg>
          </VScroll>
        </GridArea>
        <HScroll>
          <Arrow><svg width="8" height="10"><path d="M6 1L2 5l4 4" fill="none" stroke="currentColor" strokeWidth="2" /></svg></Arrow>
          <HTrack><HThumb /></HTrack>
          <Arrow><svg width="8" height="10"><path d="M2 1l4 4-4 4" fill="none" stroke="currentColor" strokeWidth="2" /></svg></Arrow>
        </HScroll>
        <SheetTabs>
          <Tool $w={28} aria-label="Add sheet"><MdAdd size={17} /></Tool>
          <Tool $w={28} aria-label="All sheets"><MdReorder size={17} /></Tool>
          <SheetTab>Sheet1<MdArrowDropDown size={16} /></SheetTab>
          <ExploreButton>
            <svg width="16" height="19"><path d="M1 0h14v16h-4l-3 3-3-3H1z" fill="#0f9d58" /><path d="M8 3l1.500 4L13 8.500 9.500 10 8 14l-1.500-4L3 8.500 6.500 7z" fill="#fff" /></svg>
            Explore
          </ExploreButton>
        </SheetTabs>
      </SheetsMain>
      <SidePanel>
        <svg width="16" height="16"><path d="M1 0h14v3H1z" fill="#c3c6ca" /><path d="M0 3h16v13H0z" fill="#3d7be8" /><text x="3" y="13" fontSize="9" fill="#fff" fontFamily="Roboto, sans-serif">31</text></svg>
        <svg width="16" height="16"><path d="M0 0h16v12l-4 4H0z" fill="#f5ba15" /><path d="M12 16v-4h4z" fill="#fde293" /><path d="M8 3a3 3 0 0 1 1.500 5.500V10h-3V8.500A3 3 0 0 1 8 3zM6.500 12h3" fill="none" stroke="#fff" strokeWidth="1.200" /></svg>
        <svg width="18" height="18"><circle cx="9" cy="9" r="8.500" fill="#4285f4" /><path d="M6 10l2.500 2.500L13.500 6" fill="none" stroke="#fff" strokeWidth="2.500" /><circle cx="4.500" cy="9" r="1.700" fill="#fbbc04" /></svg>
        <Spacer />
        <MdChevronRight size={18} />
      </SidePanel>
    </SheetsBody>
  </Screen>
);

export default function App() {
  return (
    <Desktop>
      <Global />
      <ChromeSide />
      <SheetsSide />
    </Desktop>
  );
}
